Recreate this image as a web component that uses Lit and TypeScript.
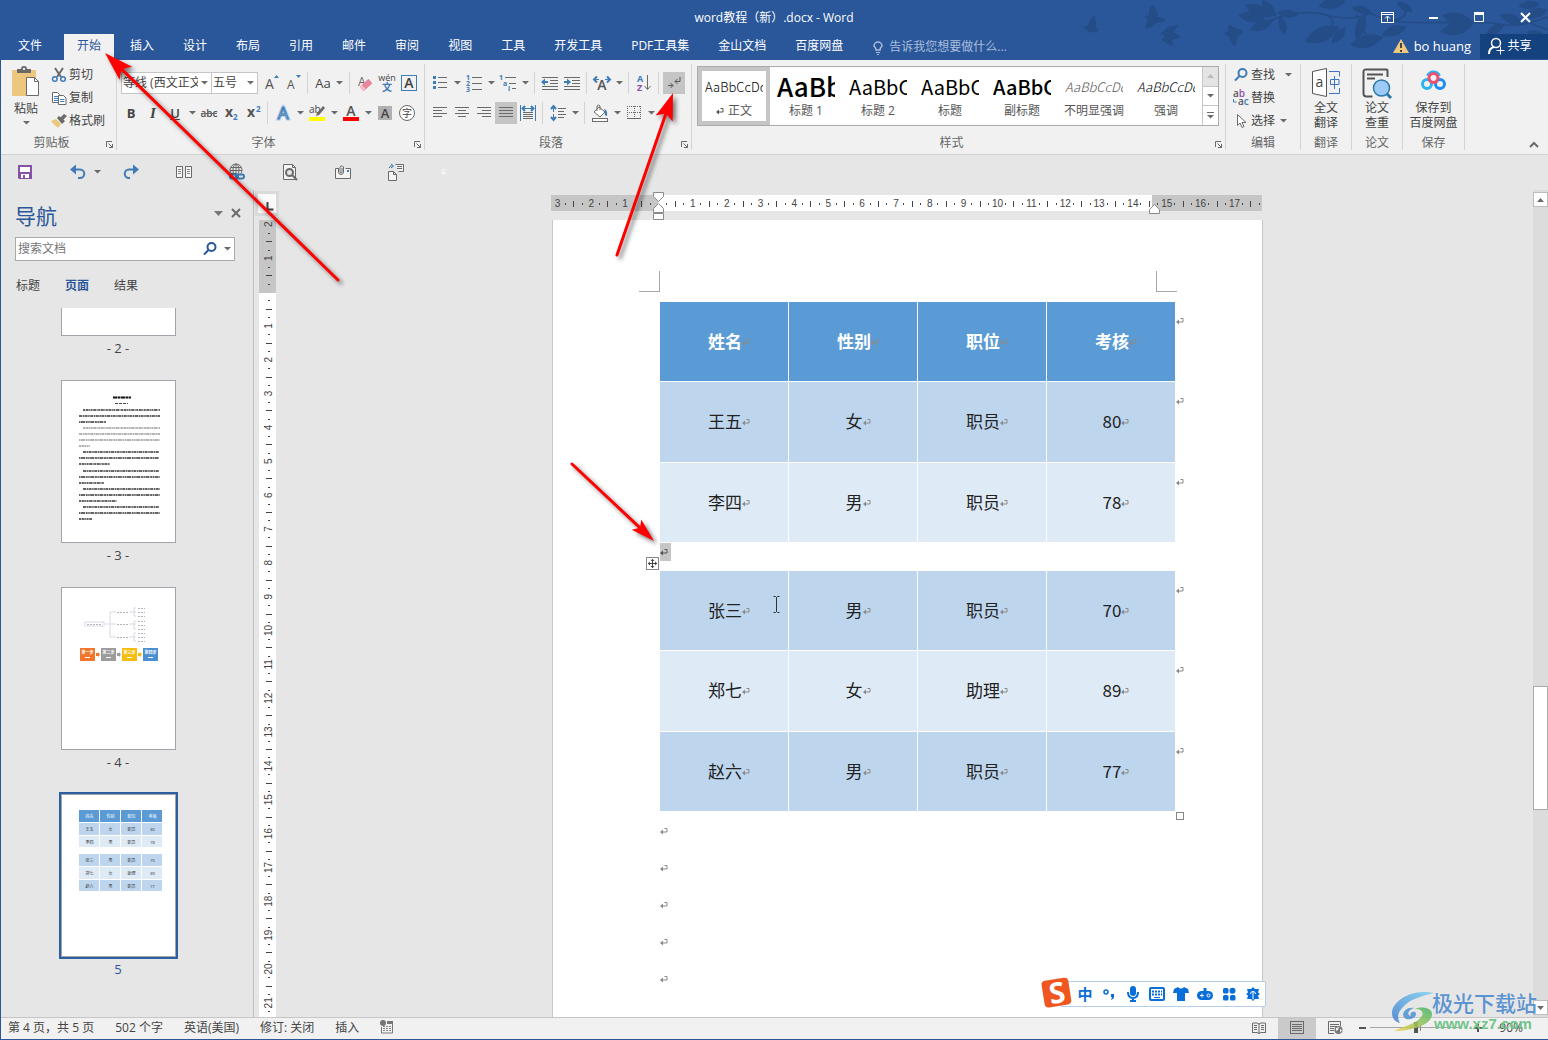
import { LitElement, html, svg, css, nothing, TemplateResult } from "lit";
import { customElement, state } from "lit/decorators.js";
import { classMap } from "lit/directives/class-map.js";

const G = "#6a6a6a";
const B = "#3f7bb6";

const icon = (w: number, h: number, body: unknown, vb = `0 0 ${w} ${h}`) =>
  html`<svg class="ic" width=${w} height=${h} viewBox=${vb} aria-hidden="true">${body}</svg>`;

const line = (d: string, c = G, w = 1) => svg`<path d=${d} fill="none" stroke=${c} stroke-width=${w}/>`;
const fill = (d: string, c = G) => svg`<path d=${d} fill=${c}/>`;

const caret = () => html`<svg class="caret" width="7" height="4" viewBox="0 0 7 4" aria-hidden="true"><path d="M0 0h7L3.500 3.500z" fill="#6a6a6a"/></svg>`;

const paraMark = (c = "#8a8a8a") => icon(8, 8, svg`
  <path d="M4.500 1.500h2.500v3.500h-5" fill="none" stroke=${c}/>
  <path d="M0 5L3 2.500V7.500z" fill=${c}/>`);

const I = {
  paste: () => icon(30, 32, svg`
    <rect x="1" y="5" width="24" height="26" rx="1" fill="#eec77f"/>
    <path d="M6 8V4h4a3 3 0 0 1 6 0h4v4z" fill="#6a6a6a"/><rect x="12" y="3" width="2" height="2" fill="#f1f1f1"/>
    <path d="M15.500 12.500h8l4 4v14h-12z" fill="#fff" stroke="#6a6a6a"/><path d="M23.500 12.500v4h4" fill="none" stroke="#6a6a6a"/>`),
  cut: () => icon(16, 16, svg`
    ${line("M4 1l6 9M12 1l-6 9", G, 2)}
    <circle cx="3.800" cy="12" r="2.300" fill="none" stroke=${B} stroke-width="1.500"/>
    <circle cx="12" cy="12" r="2.300" fill="none" stroke=${B} stroke-width="1.500"/>`),
  copy: () => icon(16, 16, svg`
    <path d="M1.500 2.500h5l2 2v8h-7z" fill="#fff" stroke=${G}/>${line("M3 6.500h4M3 8.500h4M3 10.500h4", B)}
    <path d="M7.500 5.500h5l2.500 2.500v6.500h-7.500z" fill="#fff" stroke=${G}/>${line("M9 9.500h4.500M9 11.500h4.500", B)}`),
  brush: () => icon(16, 16, svg`
    ${fill("M0 8l5-2 5 5-3 4q-3-2-7-7z", "#eec77f")}${fill("M6 5l2-2 6 5-3 3z")}${fill("M9 5l4-4 3 2-4 4z")}`),
  grow: () => icon(18, 18, svg`<text x="3" y="15" font-size="14" fill="#555" class="gl">A</text>${fill("M12 4h5L14.500 1z", B)}`),
  shrink: () => icon(18, 18, svg`<text x="3" y="15" font-size="12" fill="#555" class="gl">A</text>${fill("M12 1h5L14.500 4z", B)}`),
  erase: () => icon(18, 18, svg`<text x="2" y="12" font-size="12" fill="#666" class="gl">A</text>
    <g transform="rotate(-42 10 11)"><rect x="4" y="8" width="12" height="6" rx="1" fill="#e8879b"/><rect x="4" y="8" width="3" height="6" fill="#f5bcc7"/></g>`),
  wen: () => icon(20, 20, svg`<text x="10" y="8" font-size="9" fill="#444" text-anchor="middle" class="gl">wén</text>
    <text x="10" y="18" font-size="10" font-weight="700" fill=${B} text-anchor="middle" class="gl">文</text>`),
  boxA: () => icon(18, 18, svg`<rect x="1.500" y="1.500" width="15" height="15" fill="none" stroke=${B}/>
    <text x="9" y="14" font-size="14" fill="#444" font-weight="600" text-anchor="middle" class="gl">A</text>`),
  strike: () => icon(18, 18, svg`<text x="9" y="13" font-size="10" fill="#555" font-weight="600" text-anchor="middle" class="gl">abc</text>${line("M1 9.500h16")}`),
  sub: () => icon(18, 18, svg`<text x="3" y="13" font-size="14" fill="#555" font-weight="700" class="gl">x</text><text x="11" y="16" font-size="8" fill=${B} font-weight="700" class="gl">2</text>`),
  sup: () => icon(18, 18, svg`<text x="3" y="13" font-size="14" fill="#555" font-weight="700" class="gl">x</text><text x="12" y="8" font-size="8" fill=${B} font-weight="700" class="gl">2</text>`),
  effect: () => icon(18, 18, svg`<text x="9" y="15" font-size="17" fill="#fff" stroke="#b9d3ec" stroke-width="3" text-anchor="middle" class="gl">A</text>
    <text x="9" y="15" font-size="17" fill="#fff" stroke=${B} text-anchor="middle" class="gl">A</text>`),
  mark: () => icon(18, 18, svg`<text x="1" y="9" font-size="10" fill="#444" class="gl">ab</text>${fill("M15 2l2 2-6 7-3 1 1-3z")}<rect x="1" y="13" width="16" height="4" fill="#ff0"/>`),
  color: () => icon(18, 18, svg`<text x="9" y="12" font-size="14" fill="#555" font-weight="600" text-anchor="middle" class="gl">A</text><rect x="1" y="13" width="16" height="4" fill="#f00"/>`),
  shade: () => icon(18, 18, svg`<rect x="2" y="2" width="14" height="14" fill="#b0b0b0"/><text x="9" y="14" font-size="13" fill="#444" font-weight="600" text-anchor="middle" class="gl">A</text>`),
  circled: () => icon(18, 18, svg`<circle cx="9" cy="9" r="7.500" fill="#fff" stroke=${G}/><text x="9" y="13" font-size="10" fill="#444" text-anchor="middle" class="gl">字</text>`),
  bullets: () => icon(16, 16, svg`${fill("M1 1h3v3h-3zM1 6h3v3h-3zM1 11h3v3h-3z", B)}${line("M6 2.500h9M6 7.500h9M6 12.500h9")}`),
  numbers: () => icon(16, 18, svg`<g font-size="7" font-weight="700" fill=${B} class="gl"><text x="0" y="6">1</text><text x="0" y="12">2</text><text x="0" y="18">3</text></g>${line("M6 3.500h10M6 9.500h10M6 15.500h10")}`),
  multi: () => icon(18, 18, svg`<g font-size="7" font-weight="700" fill=${B} class="gl"><text x="0" y="6">1</text><text x="4" y="12">a</text><text x="9" y="17">i</text></g>${line("M6 3.500h11M10 9.500h7M13 14.500h4")}`),
  outdent: () => icon(18, 16, svg`${line("M1 2.500h16M9 5.500h8M9 8.500h8M1 11.500h16M1 14.500h16")}${fill("M0 7l4-3.500v2.500h3v2h-3v2.500z", B)}`),
  indent: () => icon(18, 16, svg`${line("M1 2.500h16M9 5.500h8M9 8.500h8M1 11.500h16M1 14.500h16")}${fill("M8 7l-4-3.500v2.500h-3v2h3v2.500z", B)}`),
  asian: () => icon(18, 16, svg`<text x="9" y="15" font-size="14" fill="#555" font-weight="600" text-anchor="middle" class="gl">A</text>${line("M6 4.500h-5M12 4.500h5", B, 1)}${line("M4 1.500l-3 3 3 3M14 1.500l3 3-3 3", B, 2)}`),
  sort: () => icon(18, 18, svg`<text x="2" y="8" font-size="9" font-weight="700" fill=${B} class="gl">A</text><text x="2" y="17" font-size="9" font-weight="700" fill="#8f4fa8" class="gl">Z</text>${line("M12.500 1v14M9.500 12l3 3.500 3-3.500")}`),
  marks: () => icon(16, 16, svg`${line("M14 2v4.500h-5M11.500 4l-2.500 2.500 2.500 2.500", "#555")}${line("M2 10.500h5M4.500 8l2.500 2.500-2.500 2.500", "#555")}`),
  left: () => icon(16, 16, svg`${line("M1 2.500h14M1 5.500h9M1 8.500h14M1 11.500h9")}`),
  center: () => icon(16, 16, svg`${line("M1 2.500h14M4 5.500h8M1 8.500h14M4 11.500h8")}`),
  right: () => icon(16, 16, svg`${line("M1 2.500h14M6 5.500h9M1 8.500h14M6 11.500h9")}`),
  justify: () => icon(16, 16, svg`${line("M1 2.500h14M1 5.500h14M1 8.500h14M1 11.500h14")}`),
  spread: () => icon(16, 16, svg`${line("M.5 0v16M15.500 0v16M3 3.500h10", B)}${line("M5 1l-2.500 2.500 2.500 2.500M11 1l2.500 2.500-2.500 2.500", B, 2)}${line("M3 7.500h10M3 9.500h10M3 11.500h10M3 13.500h10")}`),
  spacing: () => icon(16, 16, svg`${line("M3.500 1v6M3.500 9v6", B)}${line("M1 4l2.500-3 2.500 3M1 12l2.500 3 2.500-3", B, 2)}${line("M8 3.500h8M8 6.500h6M8 9.500h8M8 12.500h6")}`),
  bucket: () => icon(18, 18, svg`<path d="M3 8l5-5 6 5-5 5z" fill="#fff" stroke=${G}/>${line("M6 7V2q2-2 3 0v4")}${fill("M13 5q4 1 3 7-3 0-2-4z", B)}<rect x="1.500" y="14.500" width="15" height="3" fill="#fff" stroke=${G}/>`),
  borders: () => icon(16, 16, svg`<path d="M1.500 1v12M14.500 1v12M8.500 1v12M1 1.500h14M1 7.500h14" fill="none" stroke=${G} stroke-dasharray="1 1"/>${line("M1 13.500h14")}`),
  find: (c = B) => icon(16, 16, svg`<circle cx="9.500" cy="6" r="4" fill="none" stroke=${c} stroke-width="2"/>${line("M6.500 9L2 13.500", c, 2)}`),
  replace: () => icon(16, 18, svg`<g font-size="10" font-weight="600" class="gl"><text x="0" y="8" fill="#555">a<tspan fill="#8f4fa8">b</tspan></text><text x="5" y="16" fill="#555">a<tspan fill=${B}>c</tspan></text></g>${line("M.5 10v3h3", B)}`),
  pointer: () => icon(16, 16, svg`<path d="M4.500 1.500v11l2.500-2.500 2 4.500 2-1-2-4h4z" fill="#fff" stroke=${G}/>`),
  translate: () => icon(30, 30, svg`<path d="M1.500 3.500L15.500 .5v28l-14-3z" fill="#fff" stroke="#555"/><text x="8.500" y="19" font-size="14" fill="#444" text-anchor="middle" class="gl">a</text>
    ${line("M18 3.500h10.500v5M28.500 20v5.500H18M23.500 8v13M19.500 11.500h8.500v5h-8.500z", "#3f74c4")}`),
  paper: () => icon(30, 30, svg`<path d="M25.500 9V2.500a1 1 0 0 0-1-1h-21a2 2 0 0 0-2 2v22a3 3 0 0 0 3 3h6" fill="none" stroke="#555" stroke-width="2"/>${line("M5 6.500h16M5 10.500h8", "#555", 2)}${line("M25 26l4 4", "#2b77a8", 3)}
    <circle cx="19.500" cy="20" r="8" fill="#9ccbf7" stroke="#2b77a8" stroke-width="1.500"/>`),
  cloud: () => icon(28, 26, svg`
    <circle cx="7" cy="16" r="4.500" fill="none" stroke="#2bb3f0" stroke-width="3"/><circle cx="20" cy="16" r="4.500" fill="none" stroke="#1d8df5" stroke-width="3"/>
    <path d="M8 8a6 6 0 0 1 11 0" fill="none" stroke="#24b4f2" stroke-width="4"/>
    <circle cx="13.500" cy="10" r="4.500" fill="none" stroke="#f0506e" stroke-width="3"/>`),
  launch: () => icon(9, 9, svg`${line("M1.500 7V1.500H7")}${line("M3.500 3.500l4 4M7.500 4v3.500H4")}`),
  save: () => icon(16, 16, svg`${fill("M1 1h14v14H2l-1-1z", "#8552a8")}<rect x="3" y="3" width="10" height="5" fill="#fff"/><rect x="4" y="10" width="8" height="4" fill="#fff"/><rect x="6" y="11" width="2" height="3" fill="#8552a8"/>`),
  undo: () => icon(16, 16, svg`${line("M3 5.500h7a4 4 0 0 1 0 8.500h-2", B, 2)}${fill("M0 5.500l6-5v10z", B)}`),
  redo: () => icon(16, 16, svg`${line("M13 5.500H6a4 4 0 0 0 0 8.500h1", B, 2)}${fill("M16 5.500l-6-5v10z", B)}`),
  columns: () => icon(18, 14, svg`<path d="M1.500 1.500h6v11h-6zM10.500 1.500h6v11h-6z" fill="#f4f4f4" stroke=${G}/>${line("M3 4.500h3M3 6.500h3M3 8.500h3M12 4.500h3M12 6.500h3M12 8.500h3", "#888")}`),
  weblink: () => icon(18, 18, svg`<circle cx="8" cy="7" r="6" fill="none" stroke=${G}/><ellipse cx="8" cy="7" rx="3" ry="6" fill="none" stroke=${G}/>${line("M8 1v12M2 7.500h12M3 4.500h10M3 10.500h6")}
    <rect x="2" y="11.500" width="8" height="4" rx="2" fill="#e6e6e6" stroke=${B} stroke-width="2"/><rect x="8" y="11.500" width="8" height="4" rx="2" fill="none" stroke=${B} stroke-width="2"/>`),
  preview: () => icon(16, 18, svg`<path d="M1.500 1.500h9l3 3v12h-12z" fill="#f4f4f4" stroke=${G}/>${line("M10.500 1.500v3h3")}<circle cx="7.500" cy="9.500" r="3.500" fill="#e6e6e6" stroke=${G} stroke-width="2"/>${line("M10 12l5 5", G, 2)}`),
  attach: () => icon(18, 16, svg`<path d="M4.500 4.500h-3v10h15v-10h-5" fill="#f4f4f4" stroke=${G}/><path d="M4.500 4v4a2.500 2.500 0 0 0 5 0V3a2 2 0 0 0-3.500 0v5a1 1 0 0 0 2 0V4" fill="none" stroke=${G}/><rect x="13" y="6" width="2" height="2" fill=${B}/>`),
  merge: () => icon(18, 18, svg`<path d="M1.500 8.500h5l3 3v6h-8z" fill="#f4f4f4" stroke=${G}/>${line("M6.500 8.500v3h3")}<path d="M8.500 1.500h8v7h-5" fill="#f4f4f4" stroke=${G}/>${line("M10 3.500h5M10 5.500h5")}${line("M2 5q1-3 4-2M4 1l2.500 2-2.500 2", B)}`),
  bulb: () => icon(12, 16, svg`<path d="M4 11q0-2-2-4a4 4 0 1 1 8 0q-2 2-2 4z" fill="none" stroke="#a9bddb" stroke-width="1.500"/>${line("M4 13.500h4M5 15.500h2", "#a9bddb")}`),
  warn: () => icon(16, 14, svg`${fill("M8 0l8 14H0z", "#eec77f")}<rect x="7" y="4" width="2" height="5" fill="#444"/><rect x="7" y="11" width="2" height="2" fill="#444"/>`),
  person: () => icon(17, 18, svg`<circle cx="8" cy="6" r="4.500" fill="none" stroke="#fff" stroke-width="1.500"/>${line("M1 17q0-6 5-7", "#fff", 2)}${line("M12.500 9.500v8M8.500 13.500h8", "#fff", 1)}`),
  display: () => icon(13, 11, svg`<rect x=".5" y=".5" width="12" height="10" fill="none" stroke="#fff"/>${line("M1 2.500h11", "#fff")}${line("M6.500 9.500v-5M4 6.500l2.500-2.500 2.500 2.500", "#fff")}`),
  min: () => icon(10, 10, svg`<rect x="1" y="5" width="9" height="2" fill="#fff"/>`),
  max: () => icon(11, 11, svg`${line("M.5 0v9.500h9V0", "#fff")}<rect x="0" y="0" width="10" height="3" fill="#fff"/>`),
  close: () => icon(11, 11, svg`${line("M1 1l9 9M10 1l-9 9", "#fff", 2)}`),
  up: () => icon(10, 7, svg`${line("M1 6l4-4 4 4", G, 2)}`),
  reader: () => icon(14, 14, svg`${line("M1 2h4l2 1 2-1h4M1 11.500h4l2 1 2-1h4M.5 2v10M13.500 2v10M7 3v10")}${line("M2 4.500h3M2 6.500h3M2 8.500h3M9 4.500h3M9 6.500h3M9 8.500h3")}`),
  layout: () => icon(14, 14, svg`<rect x=".5" y=".5" width="13" height="12" fill="none" stroke=${G}/>${line("M2 3.500h10M2 5.500h10M2 7.500h10M2 9.500h10")}`),
  web: () => icon(15, 14, svg`${line("M12.500 5V.5H.5v12H6M2 3.500h9M2 5.500h7M2 7.500h4M2 9.500h4")}<circle cx="10.500" cy="9" r="4" fill="#777"/>${fill("M8 7l3-1-1 3-2 1zM12 8l2 1-2 3z", "#eee")}`),
  record: () => icon(14, 14, svg`<circle cx="3" cy="3" r="3" fill="#777"/>${line("M1.500 7v6h11V2.500H7", "#777")}${fill("M7 1h6v3H7z", "#777")}<path d="M3 6.500h9M3 8.500h9M3 10.500h9" stroke="#888" stroke-dasharray="2 1"/>`),
};

const tabs = ["插入", "设计", "布局", "引用", "邮件", "审阅", "视图", "工具", "开发工具", "PDF工具集", "金山文档", "百度网盘"];

const styleItems = [
  { name: "正文", sample: "AaBbCcDd", kind: "small", mark: true },
  { name: "标题 1", sample: "AaBbC", kind: "huge" },
  { name: "标题 2", sample: "AaBbC", kind: "big" },
  { name: "标题", sample: "AaBbC", kind: "big" },
  { name: "副标题", sample: "AaBbC", kind: "big bold" },
  { name: "不明显强调", sample: "AaBbCcDd", kind: "small slant pale" },
  { name: "强调", sample: "AaBbCcDd", kind: "small slant" },
];

const upperRows = [["王五", "女", "职员", "80"], ["李四", "男", "职员", "78"]];
const lowerRows = [["张三", "男", "职员", "70"], ["郑七", "女", "助理", "89"], ["赵六", "男", "职员", "77"]];
const headRow = ["姓名", "性别", "职位", "考核"];

const leaf = (x1: number, y1: number, x2: number, y2: number, k = 0.24) => {
  const mx = (x1 + x2) / 2, my = (y1 + y2) / 2, dx = (x2 - x1) * k * 1.6, dy = (y2 - y1) * k * 1.6;
  return svg`<path d=${`M${x1} ${y1}Q${mx - dy} ${my + dx} ${x2} ${y2}Q${mx + dy} ${my - dx} ${x1} ${y1}z`}/>`;
};

const headerArt = () => html`<svg class="art" width="478" height="60" viewBox="0 0 1434 180" aria-hidden="true">
  <g fill="#244c86" transform="translate(360 0)">
    <path d="M120 75l18 10 20 7-3 11-13 5q-2 17-7 30-15-8-17-28l-16-10 13-5q-3-15 5-20z"/>
    <g fill="none" stroke="#244c86" stroke-width="5">
      <path d="M240 62Q330 25 410 45T540 40M410 45Q440 60 420 90M540 40Q600 70 700 68T900 68Q980 90 1074 50M640 20Q660 50 610 62M1020 70L1074 90M500 42L530 110"/>
    </g>
    ${[[145, 45, 225, 58], [165, 15, 245, 50], [215, 0, 258, 50], [180, 90, 250, 62], [270, 48, 285, 104], [262, 38, 325, 44], [345, 125, 448, 80], [425, 130, 468, 82], [385, 18, 468, 4], [525, 45, 498, 118], [480, 136, 580, 112], [545, 38, 485, 22], [620, 5, 668, 36], [575, 105, 650, 80], [755, 45, 850, 68], [750, 96, 850, 74], [885, 105, 945, 72], [930, 45, 1000, 70], [985, 18, 1050, 12], [1000, 50, 1074, 30], [1010, 95, 1070, 110]].map(([a, b, c, d]) => leaf(a, b, c, d))}
  </g>
  <g fill="#244c86" transform="translate(-660 0)">
    <path d="M735 45l3 35 9 12-12 5h-17l-20-17 14-2q6-23 23-33z"/>
    <path d="M908 14q17 16 14 36l23 5-3 10-22 3q-15 17-35 16 5-14 8-24l-10-10q12-2 14-5-2-20 11-31z"/>
    <path d="M985 75q-10 15-15 23l20 10-5 7-20 5q5 10 3 18-23-8-33-20l10-8-15-12 12-3q8-20 43-20z"/>
  </g></svg>`;

const STEP = 33.85;

const hRuler = () => {
  const zero = 107, marks: TemplateResult[] = [];
  for (let q = -12; q <= 71; q++) {
    const x = zero + (q * STEP) / 4;
    if (q === 0) continue;
    if (q % 4 === 0) marks.push(svg`<text x=${x + 1} y="12" text-anchor="middle">${Math.abs(q / 4)}</text>` as TemplateResult);
    else if (q % 2 === 0) marks.push(svg`<rect x=${Math.round(x)} y="6" width="1" height="6"/>` as TemplateResult);
    else marks.push(svg`<rect x=${Math.round(x)} y="8" width="1" height="2"/>` as TemplateResult);
  }
  return html`<svg class="hruler" width="711" height="25" viewBox="0 0 711 25" aria-hidden="true">
    <rect width="711" height="16" fill="#c6c6c6"/><rect x="107" width="494" height="16" fill="#fff"/>
    <g>${marks}</g>
    <g class="knob"><path d="M102.500 -2.500h10v4l-5 5-5-5z"/><path d="M107.500 8.500l5 5v4h-10v-4z"/><path d="M102.500 18.500h10v6h-10z"/><path d="M603.500 9.500l5 5v4h-10v-4z"/></g>
  </svg>`;
};

const vRuler = () => {
  const zero = 72, marks: TemplateResult[] = [];
  for (let q = -8; q <= 86; q++) {
    const y = zero + (q * STEP) / 4;
    if (q === 0 || y < 1) continue;
    if (q % 4 === 0) marks.push(svg`<text transform=${`translate(13 ${y}) rotate(-90)`} text-anchor="middle">${Math.abs(q / 4)}</text>` as TemplateResult);
    else if (q % 2 === 0) marks.push(svg`<rect x="7" y=${Math.round(y)} width="6" height="1"/>` as TemplateResult);
    else marks.push(svg`<rect x="9" y=${Math.round(y)} width="2" height="1"/>` as TemplateResult);
  }
  return html`<svg class="vruler" width="17" height="797" viewBox="0 0 17 797" aria-hidden="true">
    <rect width="17" height="797" fill="#fff"/><rect width="17" height="73" fill="#c6c6c6"/><g>${marks}</g></svg>`;
};

const arrow = (x1: number, y1: number, x2: number, y2: number, len: number, half: number) => {
  const l = Math.hypot(x2 - x1, y2 - y1), ux = (x2 - x1) / l, uy = (y2 - y1) / l;
  const bx = x2 - ux * len, by = y2 - uy * len, ix = x2 - ux * len * 0.8, iy = y2 - uy * len * 0.8;
  return svg`<path d=${`M${x1} ${y1}L${ix} ${iy}`} stroke="#f00" stroke-width="3" stroke-linecap="round"/>
    <path d=${`M${x2} ${y2}L${bx - uy * half} ${by + ux * half}L${ix} ${iy}L${bx + uy * half} ${by - ux * half}z`} fill="#f00"/>`;
};

const thumbText = () => {
  const rows: [number, number][] = [[22, 98], [18, 98], [18, 44], [22, 98], [18, 98], [18, 98], [18, 28], [22, 97], [18, 97], [18, 48], [22, 97], [18, 98], [18, 42], [22, 98], [18, 98], [18, 55], [22, 97], [18, 98], [18, 30]];
  return html`<svg width="113" height="161" viewBox="0 0 113 161" aria-hidden="true">
    <path d="M51 16.500h18" stroke="#111" stroke-width="2" stroke-dasharray="4 .5 3 .5"/><path d="M53 22.500h13" stroke="#444" stroke-width="1" stroke-dasharray="3 1"/>
    ${rows.map(([a, b], i) => svg`<path d=${`M${a - 1} ${29 + Math.round(i * 6.05)}H${b}`} stroke="#333" stroke-width=${i > 2 && i < 7 ? 1 : 2} stroke-opacity=".75" stroke-dasharray=${["2 .6 3 .5 1 .5", "3 .6 1.500 .5", "1.500 .5 4 .7 2 .5"][i % 3]}/>`)}
  </svg>`;
};

const thumbChart = () => html`<svg width="113" height="161" viewBox="0 0 113 161" aria-hidden="true">
  <g stroke="#d8dae4" fill="none"><path d="M43 36h5M48 24v25M48 24h6M48 36h6M48 49h6M67 24h7M67 36h7M67 49h7M74 20h-2v8h2M74 33h-2v8h2M74 45h-2v8h2"/><rect x="23" y="34" width="19" height="4" fill="#fff"/></g>
  <g stroke="#b5b5b5" stroke-dasharray="2 1"><path d="M25 36.500h15M55 24.500h11M55 36.500h11M55 49.500h11M76 20.500h7M76 24.500h7M76 28.500h7M76 33.500h7M76 37.500h7M76 41.500h7M76 45.500h7M76 49.500h7M76 53.500h7"/></g>
  ${[["#f0762b", "第一步"], ["#9c9c9c", "第二步"], ["#f5bd10", "第三步"], ["#4a90d0", "第四步"]].map(([c, t], i) => svg`
    <rect x=${18 + i * 21} y="60" width="15" height="13" fill=${c}/><text x=${25.5 + i * 21} y="66" font-size="4" font-weight="700" fill="#fff" text-anchor="middle">${t}</text><path d=${`M${23 + i * 21} 69.500h5`} stroke="#fff"/>
    ${i < 3 ? svg`<path d=${`M${34 + i * 21} 65h2v-1l2 2.500-2 2.500v-1h-2z`} fill=${c}/>` : nothing}`)}
</svg>`;

const thumbTable = () => html`<svg width="113" height="161" viewBox="0 0 113 161" aria-hidden="true">
  ${[headRow, ...upperRows, ...lowerRows].map((r, i) => r.map((t, j) => {
    const y = [15, 28, 41, 59, 72, 85][i], f = ["#5b9bd5", "#bdd6ee", "#deeaf6", "#bdd6ee", "#deeaf6", "#bdd6ee"][i];
    return svg`<rect x=${17 + j * 21} y=${y} width="20" height=${i === 2 || i === 5 ? 11 : 12} fill=${f}/>
      <text x=${27.5 + j * 21} y=${y + 8} font-size="4" text-anchor="middle" fill=${i ? "#333" : "#fff"}>${t}</text>`;
  }))}</svg>`;

@customElement("app-root")
export class AppRoot extends LitElement {
  @state() private pane = "页面";

  static styles = css`
    :host { display: block; height: 100vh; font: 12px/16px "Open Sans", "Noto Sans CJK SC", sans-serif; color: #444; }
    * { box-sizing: border-box; }
    button, input, select { font: inherit; color: inherit; border: 0; background: none; padding: 0; margin: 0; }
    button { display: flex; align-items: center; justify-content: center; white-space: nowrap; }
    a { color: inherit; text-decoration: none; }
    svg { display: block; flex: none; }
    .ic { overflow: visible; }
    .gl { font-family: "Open Sans", "Noto Sans CJK SC", sans-serif; }
    .app { position: relative; height: 100%; display: flex; flex-direction: column; background: #e6e6e6; border-left: 1px solid #2a579a; border-bottom: 1px solid #2a579a; overflow: hidden; }

    .head { position: relative; background: #2a579a; color: #fff; margin-left: -1px; }
    .art { position: absolute; right: 0; top: 0; }
    .titlebar { position: relative; height: 34px; display: grid; grid-template-columns: 184px 1fr 184px; align-items: center; text-align: center; }
    .title { grid-column: 2; padding-top: 1px; }
    .win { display: flex; }
    .win button { flex: 1; height: 32px; }
    .menu { position: relative; display: flex; height: 26px; align-items: stretch; padding-left: 1px; }
    .tabs { display: flex; gap: 3px; }
    .tab { padding: 0 13px 3px; }
    .tab.file { padding: 0 17px 3px; margin-right: 2px; }
    .tab.on { background: #f1f1f1; color: #2a579a; }
    .tell { display: flex; align-items: center; gap: 5px; color: #a9bddb; margin-left: 16px; }
    .user { margin-left: auto; display: flex; align-items: center; gap: 5px; padding: 0 9px 3px 0; font-size: 13px; }
    .share { width: 68px; gap: 2px; background: #14427e; align-self: flex-start; height: 25px; padding: 0 8px 2px 0; }

    .ribbon { flex: none; height: 95px; display: flex; background: #f1f1f1; border-bottom: 1px solid #d2d2d2; padding: 4px 0; }
    .group { display: flex; flex-direction: column; border-right: 1px solid #d4d4d4; }
    .body { flex: 1; display: flex; min-height: 0; }
    .cap { display: flex; height: 14px; align-items: center; color: #666; }
    .cap span { flex: 1; text-align: center; }
    .cap button { width: 14px; height: 14px; align-items: flex-end; padding-bottom: 1px; }
    .g-clip { width: 116px; } .g-font { width: 308px; } .g-para { width: 267px; } .g-style { width: 534px; } .g-edit { width: 75px; } .g-tool { width: 51px; } .g-save { width: 62px; }
    .fold { margin-left: auto; align-self: flex-end; width: 28px; height: 12px; }

    .paste { flex-direction: column; justify-content: flex-start; width: 50px; padding-top: 1px; gap: 4px; }
    .stack { display: flex; flex-direction: column; margin-top: -1px; }
    .stack button { height: 23px; justify-content: flex-start; gap: 2px; }
    .stack .caret { margin-left: 3px; }
    .g-edit .stack { padding-left: 7px; }
    .g-edit .find .caret { margin-left: 8px; }
    .rows { display: flex; flex-direction: column; padding: 3px 0 0 4px; }
    .g-font .rows { padding-left: 3px; }
    .row { display: flex; height: 31px; flex: none; align-items: center; }
    .row + .row { height: 30px; }
    .tool { width: 22px; height: 22px; }
    .tool.wide { width: 34px; gap: 5px; font-size: 13px; }
    .tool.on { background: #c5c5c5; }
    .drop { width: 12px; height: 22px; }
    .sep { width: 1px; height: 22px; background: #d4d4d4; margin: 0 4px 0 3px; }
    .combo { display: flex; align-items: center; height: 22px; background: #fff; border: 1px solid #c6c6c6; padding-right: 3px; gap: 3px; }
    .combo select { appearance: none; flex: 1; min-width: 0; overflow: hidden; padding-left: 1px; }
    .combo.face { width: 91px; margin-left: 1px; }
    .combo.size { width: 47px; margin: 0 2px 0 -1px; }
    .b { font-weight: 700; font-size: 13px; } .i { font-style: italic; font-family: "Liberation Serif", serif; font-weight: 700; font-size: 15px; } .u { text-decoration: underline; font-size: 13px; font-weight: 600; }

    .gallery { display: flex; width: 522px; height: 60px; margin: 2px 0 0 5px; background: #fff; border: 1px solid #ababab; }
    .swatch { width: 72px; flex-direction: column; justify-content: flex-start; padding: 2px 3px; border: 4px solid transparent; }
    .swatch.on { border-color: #c5c5c5; }
    .sample { width: 58px; height: 30px; flex: none; overflow: hidden; line-height: 28px; text-align: left; color: #000; font-family: "Noto Sans CJK SC", sans-serif; }
    .small { font-size: 13px; font-weight: 300; } .huge { font-size: 26px; font-weight: 500; line-height: 26px; } .big { font-size: 20px; } .bold { font-weight: 500; } .slant { font-style: italic; } .pale { color: #555; }
    .label { display: flex; align-items: center; gap: 4px; color: #555; }
    .spin { margin-left: auto; width: 16px; display: flex; flex-direction: column; border-left: 1px solid #c6c6c6; }
    .spin button { flex: 1; border-bottom: 1px solid #c6c6c6; }
    .spin button:first-child { background: #e4e4e4; } .spin button:last-child { border-bottom: 0; }
    .large { flex: 1; flex-direction: column; justify-content: flex-start; line-height: 15px; padding-top: 4px; gap: 1px; }
    .large .pic { height: 31px; display: flex; align-items: flex-start; }
    .large .two { white-space: pre-line; text-align: center; }

    .quick { flex: none; display: flex; height: 35px; margin-left: -3px; padding-bottom: 1px; }
    .quick button { width: 53px; }
    .quick .with-caret .caret { margin: 0 -15px 0 8px; }
    .quick .more { color: #f8f8f8; width: 42px; }

    .main { flex: 1; min-height: 0; display: flex; }
    .nav { width: 253px; flex: none; border-right: 1px solid #bdbdbd; padding: 0 18px 0 14px; display: flex; flex-direction: column; }
    .navtop { display: flex; align-items: center; height: 47px; padding-top: 5px; margin-right: -10px; }
    h2 { font-size: 21px; line-height: 26px; font-weight: 400; color: #2a579a; margin: 0; flex: 1; }
    .navtop button { width: 18px; height: 20px; margin-bottom: 6px; }
    .search { display: flex; align-items: center; height: 24px; background: #fff; border: 1px solid #ababab; gap: 6px; padding-right: 3px; }
    .search input { flex: 1; min-width: 0; padding-left: 2px; outline: 0; }
    .search input::placeholder { color: #767676; opacity: 1; }
    .panes { display: flex; height: 47px; padding: 3px 0 0 1px; gap: 25px; }
    .panes button { color: #444; } .panes button.on { color: #2a579a; font-weight: 700; }
    .pages { flex: 1; min-height: 0; overflow: hidden; margin: 0 -18px 0 -14px; }
    .strip { margin-top: -135px; padding-right: 18px; display: flex; flex-direction: column; align-items: center; }
    .thumb { display: flex; flex-direction: column; height: 207px; line-height: 24px; font-size: 13px; justify-content: flex-start; }
    .sheet { width: 115px; height: 163px; background: #fff; border: 1px solid #a0a4ab; }
    .thumb.on { color: #2a579a; } .thumb.on .sheet { outline: 2px solid #2b5f9f; }

    .work { flex: 1; min-width: 0; display: grid; grid-template-columns: 27px 1fr; grid-template-rows: 30px 1fr; overflow: hidden; }
    .corner { display: flex; width: 24px; height: 25px; margin: 1px 0 0 1px; background: #fafafa; border: 3px solid #dadada; }
    .hbar { display: flex; justify-content: center; padding-top: 5px; }
    .hwrap { width: 712px; }
    .hruler { overflow: visible; }
    .hruler text, .vruler text { font: 10px "Liberation Sans", sans-serif; fill: #444; }
    .hruler rect, .vruler rect { shape-rendering: crispEdges; }
    .hruler g rect, .vruler g rect { fill: #444; }
    .knob path { fill: #fff; stroke: #8a8a8a; }
    .vwrap { overflow: hidden; padding-left: 5px; min-height: 0; }
    .canvas { display: flex; justify-content: center; min-height: 0; overflow: hidden; }
    .page { position: relative; width: 711px; margin-left: 1px; border: 1px solid #c6c6c6; border-width: 0 1px; background: #fff; padding: 51px 0 0 86px; }
    .crop { display: flex; justify-content: space-between; width: 538px; height: 30px; }
    .crop i { width: 21px; height: 21px; border: 1px solid #a8a8a8; border-top: 0; }
    .crop i:first-child { border-left: 0; } .crop i:last-child { border-right: 0; }
    table { table-layout: fixed; width: 534px; margin-left: 20px; border-spacing: 1px; font: 17px/24px "Noto Sans CJK SC", sans-serif; color: #222; }
    col.c { width: 128px; }
    td, th { height: 79px; padding: 0 0 2px; text-align: center; font-weight: 400; }
    .hd th { background: #5b9bd5; color: #fff; font-weight: 700; }
    .a td { background: #bdd6ee; } .z td { background: #deeaf6; }
    .a td, .mid td { height: 80px; } .end td { height: 79px; }
    tr td.eol { background: none; vertical-align: top; padding: 15px 0 0 0; }
    .cell { display: inline-flex; align-items: center; margin-right: -10px; }
    .cell .ic { margin-top: 2px; }
    .line { display: flex; align-items: center; height: 37px; margin-left: 21px; }
    .line.gap { height: 27px; align-items: flex-start; }
    .sel { background: #c6c6c6; width: 11px; height: 18px; display: flex; align-items: center; }
    .handle { position: absolute; left: 93px; top: 337px; }
    .resize { position: absolute; left: 623px; top: 592px; width: 8px; height: 8px; border: 1px solid #888; background: #fff; }
    .beam { position: absolute; left: 220px; top: 376px; }

    .vscroll { width: 15px; flex: none; display: flex; flex-direction: column; background: #dcdcdc; padding: 2px 0 2px; }
    .vscroll button { height: 15px; background: #fff; border: 1px solid #bdbdbd; }
    .vscroll .above { flex: 480; } .vscroll .grip { flex: 123; background: #fff; border: 1px solid #ababab; } .vscroll .below { flex: 190; }

    .status { flex: none; height: 22px; display: flex; background: #f1f1f1; border-top: 1px solid #c6c6c6; padding: 0 25px 2px 7px; align-items: center; }
    .facts { display: flex; gap: 21px; flex: 1; }
    .views { display: flex; align-self: stretch; margin-bottom: -2px; }
    .views button { width: 38px; padding-bottom: 1px; }
    .views .on { background: #cacaca; }
    .zoom { display: flex; align-items: center; }
    .zoom button { width: 16px; height: 18px; }
    .zoom input { appearance: none; width: 92px; height: 12px; margin-right: 8px; background: linear-gradient(#8a8a8a, #8a8a8a) 50px 50% / 1px 6px no-repeat, linear-gradient(#a6a6a6, #a6a6a6) 0 50% / 100% 1px no-repeat; }
    .zoom input::-webkit-slider-thumb { appearance: none; width: 4px; height: 11px; background: #555; }
    .pct { width: 37px; text-align: right; }

    .arrows { position: absolute; left: -1px; top: 0; pointer-events: none; fill: none; filter: drop-shadow(3px 3px 2px rgba(0, 0, 0, 0.5)); }
    .ime { position: absolute; right: 282px; bottom: 32px; width: 206px; height: 26px; background: #fff; border: 1px solid #b6cfe8; border-radius: 2px; display: flex; align-items: center; padding-left: 12px; }
    .ime button { width: 24px; flex: none; color: #0a6ed8; font: 700 15px/22px "Noto Sans CJK SC", sans-serif; }
    .brand { position: absolute; left: -21px; top: -6px; }
    .wm { position: absolute; right: 11px; bottom: 6px; display: flex; align-items: center; pointer-events: none; }
    .wm div { margin-left: -4px; display: flex; flex-direction: column; font: 500 21px/25px "Noto Sans CJK SC", sans-serif; color: #5b94d1; }
    .wm small { margin-left: 2px; font: 700 15px/18px "Liberation Sans", sans-serif; color: #72c48a; }
  `;

  private tool(name: string, pic: unknown, opts: { on?: boolean; drop?: boolean } = {}) {
    return html`<button class=${classMap({ tool: true, on: !!opts.on })} aria-label=${name}>${pic}</button>${opts.drop ? html`<button class="drop" aria-label=${name + "选项"}>${caret()}</button>` : nothing}`;
  }

  private cap(text: string, launch = true) {
    return html`<div class="cap"><span>${text}</span>${launch ? html`<button aria-label=${text + "设置"}>${I.launch()}</button>` : nothing}</div>`;
  }

  private header() {
    return html`<header class="head">${headerArt()}
      <div class="titlebar"><div class="title">word教程（新）.docx - Word</div>
        <div class="win"><button aria-label="功能区显示选项">${I.display()}</button><button aria-label="最小化">${I.min()}</button><button aria-label="最大化">${I.max()}</button><button aria-label="关闭">${I.close()}</button></div></div>
      <div class="menu"><nav class="tabs"><button class="tab file">文件</button><button class="tab on">开始</button>${tabs.map((t) => html`<button class="tab">${t}</button>`)}</nav>
        <button class="tell">${I.bulb()}告诉我您想要做什么...</button>
        <a class="user" href="#account">${I.warn()}bo huang</a><button class="share">${I.person()}共享</button></div>
    </header>`;
  }

  private ribbon() {
    const sep = html`<span class="sep"></span>`;
    return html`<section class="ribbon">
      <div class="group g-clip"><div class="body"><button class="paste">${I.paste()}<span>粘贴</span>${caret()}</button>
        <div class="stack"><button>${I.cut()}剪切</button><button>${I.copy()}复制</button><button>${I.brush()}格式刷</button></div></div>${this.cap("剪贴板")}</div>
      <div class="group g-font"><div class="body"><div class="rows">
        <div class="row"><label class="combo face"><select aria-label="字体"><option>等线 (西文正文)</option></select>${caret()}</label><label class="combo size"><select aria-label="字号"><option>五号</option></select>${caret()}</label>
          ${this.tool("增大字号", I.grow())}${this.tool("减小字号", I.shrink())}${sep}<button class="tool wide">Aa${caret()}</button>${sep}${this.tool("清除格式", I.erase())}${this.tool("拼音指南", I.wen())}${this.tool("字符边框", I.boxA())}</div>
        <div class="row"><button class="tool b">B</button><button class="tool i">I</button>${this.tool("下划线", html`<span class="u">U</span>`, { drop: true })}${this.tool("删除线", I.strike())}${this.tool("下标", I.sub())}${this.tool("上标", I.sup())}${sep}
          ${this.tool("文本效果", I.effect(), { drop: true })}${this.tool("突出显示", I.mark(), { drop: true })}${this.tool("字体颜色", I.color(), { drop: true })}${this.tool("字符底纹", I.shade())}${this.tool("带圈字符", I.circled())}</div>
      </div></div>${this.cap("字体")}</div>
      <div class="group g-para"><div class="body"><div class="rows">
        <div class="row">${this.tool("项目符号", I.bullets(), { drop: true })}${this.tool("编号", I.numbers(), { drop: true })}${this.tool("多级列表", I.multi(), { drop: true })}${sep}${this.tool("减少缩进", I.outdent())}${this.tool("增加缩进", I.indent())}${sep}${this.tool("中文版式", I.asian(), { drop: true })}${sep}${this.tool("排序", I.sort())}${sep}${this.tool("显示编辑标记", I.marks(), { on: true })}</div>
        <div class="row">${this.tool("左对齐", I.left())}${this.tool("居中", I.center())}${this.tool("右对齐", I.right())}${this.tool("两端对齐", I.justify(), { on: true })}${this.tool("分散对齐", I.spread())}${sep}${this.tool("行距", I.spacing(), { drop: true })}${sep}${this.tool("底纹", I.bucket(), { drop: true })}${this.tool("边框", I.borders(), { drop: true })}</div>
      </div></div>${this.cap("段落")}</div>
      <div class="group g-style"><div class="body"><div class="gallery">
        ${styleItems.map((s, i) => html`<button class=${classMap({ swatch: true, on: i === 0 })}><span class="sample ${s.kind}">${s.sample}</span><span class="label">${s.mark ? paraMark("#555") : nothing}${s.name}</span></button>`)}
        <div class="spin"><button aria-label="上一行">${icon(7, 4, fill("M0 4h7L3.500 0z", "#bbb"))}</button><button aria-label="下一行">${caret()}</button><button aria-label="更多样式">${icon(7, 7, svg`${line("M0 .5h7")}${fill("M0 3h7L3.500 6.500z")}`)}</button></div>
      </div></div>${this.cap("样式")}</div>
      <div class="group g-edit"><div class="body"><div class="stack"><button class="find">${I.find()}查找${caret()}</button><button>${I.replace()}替换</button><button>${I.pointer()}选择${caret()}</button></div></div>${this.cap("编辑", false)}</div>
      ${([["全文\n翻译", "翻译", I.translate(), "g-tool"], ["论文\n查重", "论文", I.paper(), "g-tool"], ["保存到\n百度网盘", "保存", I.cloud(), "g-save"]] as const).map(([t, c, p, g]) => html`
        <div class="group ${g}"><div class="body"><button class="large"><span class="pic">${p}</span><span class="two">${t}</span></button></div>${this.cap(c, false)}</div>`)}
      <button class="fold" aria-label="折叠功能区">${I.up()}</button>
    </section>`;
  }

  private quick() {
    const rest: [string, unknown][] = [["恢复", I.redo()], ["分栏", I.columns()], ["链接", I.weblink()], ["预览", I.preview()], ["附件", I.attach()], ["合并", I.merge()]];
    return html`<div class="quick"><button aria-label="保存">${I.save()}</button><button class="with-caret" aria-label="撤消">${I.undo()}${caret()}</button>
      ${rest.map(([n, p]) => html`<button aria-label=${n}>${p}</button>`)}
      <button class="more" aria-label="自定义">${icon(7, 7, svg`${line("M1 1h5", "#f8f8f8")}${fill("M1 3h5L3.500 6z", "#f8f8f8")}`)}</button></div>`;
  }

  private nav() {
    const pages: [string, unknown][] = [["- 2 -", nothing], ["- 3 -", thumbText()], ["- 4 -", thumbChart()], ["5", thumbTable()]];
    return html`<aside class="nav">
      <div class="navtop"><h2>导航</h2><button aria-label="窗格选项">${icon(9, 5, fill("M0 0h9L4.500 5z", "#777"))}</button><button aria-label="关闭窗格">${icon(10, 10, line("M1 1l8 8M9 1l-8 8", "#6a6a6a", 2))}</button></div>
      <label class="search"><input type="search" aria-label="搜索文档" placeholder="搜索文档">${I.find("#2a579a")}${caret()}</label>
      <div class="panes">${["标题", "页面", "结果"].map((p) => html`<button class=${classMap({ on: p === this.pane })} @click=${() => (this.pane = p)}>${p}</button>`)}</div>
      <div class="pages"><div class="strip">${pages.map(([n, p]) => html`<button class=${classMap({ thumb: true, on: n === "5" })}><span class="sheet">${p}</span>${n}</button>`)}</div></div>
    </aside>`;
  }

  private cells(row: string[]) {
    return row.map((t) => html`<td><span class="cell">${t}${paraMark()}</span></td>`);
  }

  private doc() {
    const cols = html`<colgroup><col class="c"><col class="c"><col class="c"><col class="c"><col></colgroup>`;
    const eol = html`<td class="eol">${paraMark()}</td>`;
    return html`<div class="work">
      <div class="corner">${icon(16, 18, line("M9.500 8v7.500h6", "#444", 2))}</div>
      <div class="hbar"><div class="hwrap">${hRuler()}</div></div>
      <div class="vwrap">${vRuler()}</div>
      <div class="canvas"><article class="page">
        <div class="crop"><i></i><i></i></div>
        <table>${cols}<thead><tr class="hd">${headRow.map((t) => html`<th><span class="cell">${t}${paraMark()}</span></th>`)}${eol}</tr></thead>
          <tbody>${upperRows.map((r, i) => html`<tr class=${i % 2 ? "z" : "a"}>${this.cells(r)}${eol}</tr>`)}</tbody></table>
        <div class="line gap"><span class="sel">${paraMark("#555")}</span></div>
        <table>${cols}<tbody>${lowerRows.map((r, i) => html`<tr class=${["a end", "z mid", "a end"][i]}>${this.cells(r)}${eol}</tr>`)}</tbody></table>
        ${[0, 1, 2, 3, 4].map(() => html`<div class="line">${paraMark()}</div>`)}
        <span class="handle">${icon(13, 13, svg`<rect x=".5" y=".5" width="12" height="12" fill="#fff" stroke="#888"/>${line("M6.500 2v9M2 6.500h9", "#444")}${fill("M4.500 4h4L6.500 2zM4.500 9h4L6.500 11zM4 4.500v4L2 6.500zM9 4.500v4L11 6.500z", "#444")}`)}</span>
        <span class="resize"></span>
        <span class="beam">${icon(8, 17, line("M.5 .5h2l1 1 1-1h2M.5 16.500h2l1-1 1 1h2M3.500 1v15", "#333"))}</span>
      </article></div></div>`;
  }

  private ime() {
    const c = "#0a6ed8";
    return html`<div class="ime">
      <span class="brand">${icon(34, 34, svg`<g transform="rotate(-9 17 17)"><rect x="3" y="3" width="27" height="27" rx="4" fill="#f0561f"/><text x="17" y="27" font-size="29" font-weight="700" fill="#fff" text-anchor="middle" class="gl">S</text></g>`)}</span>
      <button>中</button>
      <button aria-label="标点">${icon(14, 14, svg`<circle cx="4" cy="5" r="2" fill="none" stroke=${c} stroke-width="1.500"/>${fill("M9 7h3v3q0 2-3 3l1-3H9z", c)}`)}</button>
      <button aria-label="语音">${icon(14, 16, svg`<rect x="4" y="0" width="6" height="10" rx="3" fill=${c}/>${line("M2 6q0 6 5 6t5-6M7 12v3M4 15h6", c, 2)}`)}</button>
      <button aria-label="键盘">${icon(16, 14, svg`<rect x="1" y="1" width="14" height="12" rx="1" fill="none" stroke=${c} stroke-width="2"/><path d="M3 4.500h10M3 7.500h10" stroke=${c} stroke-width="2" stroke-dasharray="2 1"/>${line("M5 10.500h6", c)}`)}</button>
      <button aria-label="皮肤">${icon(16, 14, fill("M1 2l4-2q3 3 6 0l4 2 1 4h-4v8H4V6H0z", c))}</button>
      <button aria-label="智能">${icon(16, 14, svg`<rect x="0" y="4" width="16" height="9" rx="4.500" fill=${c}/><path d="M8 4V1" stroke=${c} stroke-width="3"/>${line("M3 8.500h4M5 6.500v4", "#fff")}<circle cx="11.500" cy="8.500" r="1.500" fill="none" stroke="#fff"/>`)}</button>
      <button aria-label="工具箱">${icon(14, 14, svg`<rect x="1" y="1" width="5.500" height="5.500" rx="1.500" fill=${c}/><circle cx="10.500" cy="3.800" r="3" fill=${c}/><rect x="1" y="8" width="5.500" height="5.500" rx="1.500" fill=${c}/><rect x="8" y="8" width="5.500" height="5.500" rx="1.500" fill=${c}/>`)}</button>
      <button aria-label="设置">${icon(14, 14, svg`<path d="M7 0l2 2h4l-1 3.500 2 1.500-2 1.500 1 3.500H9l-2 2-2-2H1l1-3.500L0 7l2-1.500L1 2h4z" fill=${c}/>${line("M7 4.500v8M4.500 7q0-2.500 2.500-2.500T9.500 7", "#fff")}`)}</button>
    </div>`;
  }

  render() {
    return html`<div class="app">
      ${this.header()}${this.ribbon()}${this.quick()}
      <main class="main">${this.nav()}${this.doc()}
        <div class="vscroll"><button aria-label="向上滚动">${icon(7, 4, fill("M0 4h7L3.500 0z"))}</button><span class="above"></span><span class="grip"></span><span class="below"></span><button aria-label="向下滚动">${icon(7, 4, fill("M0 0h7L3.500 4z"))}</button></div></main>
      <footer class="status"><div class="facts"><span>第 4 页，共 5 页</span><span>502 个字</span><span>英语(美国)</span><span>修订: 关闭</span><span>插入</span>${I.record()}</div>
        <div class="views"><button aria-label="阅读视图">${I.reader()}</button><button class="on" aria-label="页面视图">${I.layout()}</button><button aria-label="Web 版式">${I.web()}</button></div>
        <div class="zoom"><button aria-label="缩小">${icon(7, 2, fill("M0 0h7v2H0z", "#555"))}</button><input type="range" min="0" max="100" value="50" aria-label="缩放"><button aria-label="放大">${icon(8, 8, fill("M3 0h2v3h3v2H5v3H3V5H0V3h3z", "#555"))}</button><span class="pct">90%</span></div></footer>
      ${this.ime()}
      <div class="wm"><svg width="46" height="42" viewBox="0 0 46 42" aria-hidden="true">
          <defs><linearGradient id="wg1" x1="0" y1="1" x2="1" y2="0"><stop offset="0" stop-color="#3f7fd0"/><stop offset="1" stop-color="#7ed0f0"/></linearGradient><linearGradient id="wg2" x1="0" y1="1" x2="1" y2="0"><stop offset="0" stop-color="#f3d04a"/><stop offset="1" stop-color="#3db56a"/></linearGradient></defs>
          <path d="M44 2C22-3 2 10 2 22q0 8 8 10-5-8 3-16C20 8 32 5 44 2z" fill="url(#wg1)" opacity=".85"/>
          <path d="M4 40c18 0 38-6 38-17 0-6-10-8-17-5 9 0 10 6 3 11-6 5-14 6-24 11z" fill="url(#wg2)" opacity=".85"/>
          <path d="M24 17c-8-2-15 7-8 11 8 2 12-5 9-7-3-1-6 2-4 4-5-1-3-6 3-8z" fill="#4a93cf" opacity=".85"/></svg>
        <div>极光下载站<small>www.xz7.com</small></div></div>
      <svg class="arrows" width="700" height="560" viewBox="0 0 700 560" aria-hidden="true">${arrow(338, 280, 105, 53, 29, 9)}${arrow(617, 255, 673, 93, 27, 9)}${arrow(572, 464, 654, 541, 24, 7)}</svg>
    </div>`;
  }
}
